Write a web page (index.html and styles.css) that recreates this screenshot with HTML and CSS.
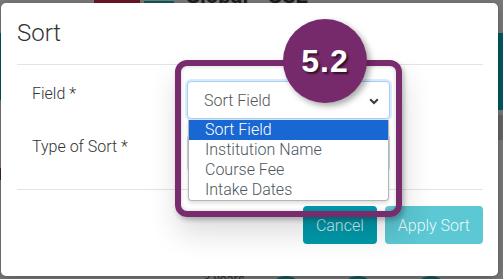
FILE: index.html
```html
<!DOCTYPE html>
<html lang="en">
<head>
    <meta charset="UTF-8">
    <meta name="viewport" content="width=device-width, initial-scale=1.0">
    <title>Sort</title>
    <link rel="stylesheet" href="styles.css">
</head>
<body>

<!-- dimmed page behind the dialog -->
<div class="backdrop">
  <span class="bit bit-red"></span>
  <span class="bit bit-teal"></span>
  <span class="bit-title">Global &bull; GSE</span>
  <span class="bit bit-left-teal"></span>
  <span class="bit bit-left-purple"></span>
  <span class="bit bit-right-teal"></span>
  <span class="bit bit-right-gray"></span>
  <span class="bit-years">3 years</span>
  <span class="bit bit-dot bit-dot1"></span>
  <span class="bit bit-dot bit-dot2"></span>
  <span class="bit bit-dot bit-dot3"></span>
</div>

<!-- sort dialog -->
<div class="modal">
  <div class="modal-header">
    <h5 class="modal-title">Sort</h5>
  </div>

  <div class="modal-body">
    <div class="form-row">
      <label class="form-label">Field *</label>
      <div class="select-wrap">
        <div class="select is-focus">
          <span>Sort Field</span>
          <svg class="chevron" width="10" height="7" viewBox="0 0 10 7"><path d="M1.2 1.2 L5 5 L8.8 1.2" fill="none" stroke="#3b3b3b" stroke-width="2"/></svg>
        </div>
        <ul class="options">
          <li class="active">Sort Field</li>
          <li>Institution Name</li>
          <li>Course Fee</li>
          <li>Intake Dates</li>
        </ul>
      </div>
    </div>
    <div class="form-row">
      <label class="form-label">Type of Sort *</label>
      <div class="select-wrap">
        <div class="select"></div>
      </div>
    </div>
  </div>

  <div class="modal-footer">
    <button class="btn btn-cancel">Cancel</button>
    <button class="btn btn-apply">Apply Sort</button>
  </div>

  <!-- annotation -->
  <div class="callout"></div>
  <div class="callout-badge">5.2</div>
</div>

</body>
</html>
```

FILE: styles.css
```css
body {
  margin: 0;
  width: 503px;
  height: 279px;
  overflow: hidden;
  background-color: #7a7a7a;
  font-family: Roboto, "Liberation Sans", sans-serif;
  position: relative;
}

/* ---------- page behind ---------- */
.backdrop {
  position: absolute;
  top: 0;
  left: 0;
  width: 100%;
  height: 100%;
}
.bit {
  position: absolute;
  display: block;
}
.bit-red { left: 94px; top: 0; width: 46px; height: 4px; background: #6c1627; }
.bit-teal { left: 144px; top: 1px; width: 30px; height: 3px; background: #0b5a61; }
.bit-title {
  position: absolute;
  left: 185px;
  top: -17px;
  font-size: 22px;
  font-weight: 700;
  color: #1e1e1e;
}
.bit-left-teal { left: 0; top: 33px; width: 1px; height: 67px; background: #06565d; }
.bit-left-purple { left: 0; top: 168px; width: 1px; height: 12px; background: #4b1d44; }
.bit-right-teal { left: 498px; top: 33px; width: 5px; height: 77px; background: #035860; }
.bit-right-gray { left: 498px; top: 115px; width: 5px; height: 25px; background: #666; }
.bit-years {
  position: absolute;
  left: 203px;
  top: 271px;
  font-size: 13px;
  color: #2f2f2f;
}
.bit-dot {
  top: 276px;
  width: 22px;
  height: 12px;
  border-radius: 50%;
  background: #0b5a60;
}
.bit-dot1 { left: 275px; }
.bit-dot2 { left: 347px; }
.bit-dot3 { left: 420px; }

/* ---------- dialog ---------- */
.modal {
  position: relative;
  margin: 3px 0 0 1px;
  width: 497px;
  height: 273px;
  background-color: #fff;
  border-radius: 5px;
  box-shadow: 0 2px 8px rgba(0, 0, 0, .3);
}

.modal-header {
  margin: 0 15px 0 16px;
  padding: 12px 0 13px;
  border-bottom: 1px solid #e4e4e4;
}
.modal-title {
  margin: 0;
  font-size: 24px;
  font-weight: 300;
  line-height: 36px;
  color: #333;
}

.modal-body {
  padding: 16px 15px 17px 31px;
}
.form-row {
  display: flex;
  margin-bottom: 15px;
}
.form-row:last-child {
  margin-bottom: 0;
}
.form-label {
  width: 155px;
  padding-top: 1px;
  font-size: 16px;
  font-weight: 300;
  line-height: 24px;
  color: #333;
}

.select-wrap {
  position: relative;
}
.select {
  box-sizing: border-box;
  width: 203px;
  height: 38px;
  padding: 0 10px 0 16px;
  display: flex;
  align-items: center;
  justify-content: space-between;
  border: 1px solid #ced4da;
  border-radius: 4px;
  font-size: 16px;
  font-weight: 300;
  color: #555;
  background: #fff;
}
.select.is-focus {
  border-color: #a9cdf3;
  box-shadow: 0 0 0 2px rgba(0, 123, 255, .15);
  padding-top: 1px;
}
.chevron {
  margin-top: 1px;
}

.options {
  position: absolute;
  top: 39px;
  left: 1px;
  z-index: 2;
  box-sizing: border-box;
  width: 201px;
  margin: 0;
  padding: 0;
  list-style: none;
  background: #fff;
  border: 1px solid #b5b5b5;
  border-top: 0;
  border-radius: 0 0 4px 4px;
  box-shadow: 0 2px 4px rgba(0, 0, 0, .15);
  overflow: hidden;
}
.options li {
  height: 20px;
  line-height: 20px;
  padding-left: 16px;
  font-size: 16px;
  font-weight: 300;
  color: #4d5660;
}
.options li.active {
  background-color: #1967d2;
  color: #fff;
}

.modal-footer {
  margin: 0 15px 0 16px;
  padding-top: 16px;
  border-top: 1px solid #e4e4e4;
  display: flex;
  justify-content: flex-end;
  gap: 8px;
}
.btn {
  height: 38px;
  padding: 0 13px;
  border: none;
  border-radius: 4px;
  font-family: Roboto, "Liberation Sans", sans-serif;
  font-size: 16px;
  font-weight: 300;
  color: rgba(255, 255, 255, .85);
}
.btn-cancel {
  background-color: #0099aa;
}
.btn-apply {
  background-color: #5bc8d4;
  color: rgba(255, 255, 255, .9);
}

/* ---------- annotation ---------- */
.callout {
  position: absolute;
  left: 174px;
  top: 57px;
  width: 227px;
  height: 157px;
  box-sizing: border-box;
  border: 6px solid #782b6d;
  border-radius: 12px;
  box-shadow: 2px 16px 30px rgba(0, 0, 0, .14), 2px 3px 5px rgba(0, 0, 0, .25), inset 0 0 4px rgba(0, 0, 0, .2);
  z-index: 3;
}
.callout-badge {
  position: absolute;
  left: 282px;
  top: 16px;
  width: 84px;
  height: 84px;
  border-radius: 50%;
  background-color: #772a6b;
  box-shadow: 3px 3px 6px rgba(0, 0, 0, .35);
  display: flex;
  align-items: center;
  justify-content: center;
  font-family: "Liberation Sans", Arial, sans-serif;
  font-weight: 700;
  font-size: 32px;
  letter-spacing: 1px;
  color: #fff;
  text-shadow: 2px 2px 2px rgba(0, 0, 0, .6);
  z-index: 4;
}
```
